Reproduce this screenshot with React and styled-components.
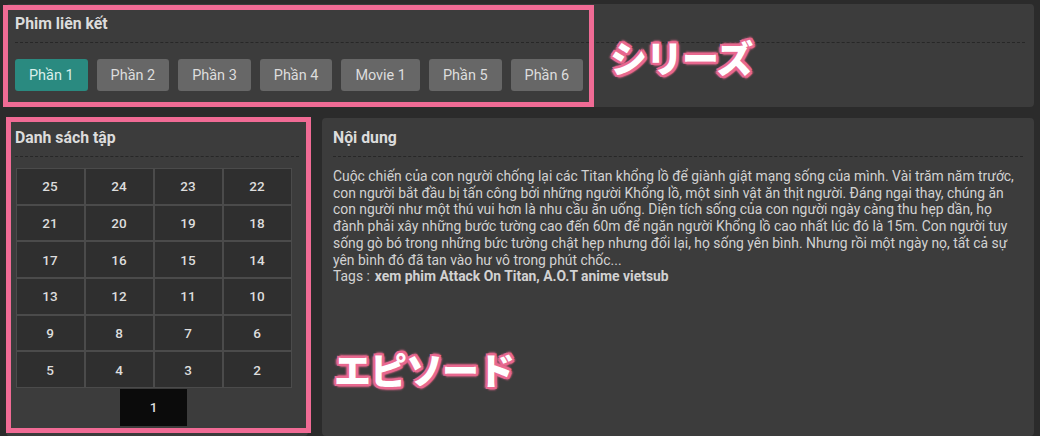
import React from "react";
import styled, { createGlobalStyle } from "styled-components";

const GlobalStyle = createGlobalStyle`
  body {
    margin: 0;
    background: #2b2b2b;
    font-family: Roboto, "Liberation Sans", sans-serif;
  }
`;

const Page = styled.div`
  position: relative;
  width: 1040px;
  height: 436px;
  overflow: hidden;
  box-sizing: border-box;
  padding: 4px 6px 0;
  display: flex;
  flex-direction: column;
  gap: 11px;
`;

const Panel = styled.section`
  background: #3c3c3c;
  border-radius: 4px;
  box-sizing: border-box;
  padding: 10px ${(p) => p.$padX || 9}px 0;
`;

const TopPanel = styled(Panel)`
  height: 103px;
`;

const Heading = styled.h2`
  margin: 0;
  font-size: 15.8px;
  font-weight: 700;
  line-height: 20px;
  color: #dcdcdc;
  padding-bottom: 8px;
  border-bottom: 1px dashed #272727;
`;

const ButtonRow = styled.div`
  margin-top: 16px;
  display: flex;
  gap: 9px;
`;

const PartButton = styled.button`
  height: 32px;
  padding: 0 14px;
  border: none;
  border-radius: 3px;
  background: ${(p) => (p.$active ? "#2a8a80" : "#676767")};
  color: ${(p) => (p.$active ? "#d9efeb" : "#dddddd")};
  font-family: Roboto, "Liberation Sans", sans-serif;
  font-size: 14.45px;
  cursor: pointer;
`;

const BottomRow = styled.div`
  flex: 1;
  display: flex;
  gap: 14px;
  min-height: 0;
`;

const EpisodePanel = styled(Panel)`
  width: 302px;
  flex-shrink: 0;
`;

const ContentPanel = styled(Panel)`
  flex: 1;
`;

const EpisodeGrid = styled.div`
  margin-top: 11px;
  width: 277px;
  display: flex;
  flex-wrap: wrap;
  justify-content: center;
`;

const Episode = styled.a`
  box-sizing: border-box;
  width: ${(p) => (p.$active ? 67 : 69)}px;
  height: 36.7px;
  display: flex;
  align-items: center;
  justify-content: center;
  background: ${(p) => (p.$active ? "#0b0b0b" : "#2f2f2f")};
  border: 1px solid ${(p) => (p.$active ? "#0b0b0b" : "#4b4b4b")};
  margin-top: ${(p) => (p.$active ? 1 : 0)}px;
  color: #dddddd;
  font-size: 13.5px;
  font-weight: 500;
`;

const Summary = styled.p`
  margin: 11px -6px 0 0;
  font-size: 13.9px;
  line-height: 16.7px;
  color: #d2d2d2;
  white-space: nowrap;
`;

const TagList = styled.b`
  font-weight: 700;
  margin-left: 5px;
`;

const Outline = styled.div`
  position: absolute;
  left: ${(p) => p.$left}px;
  top: ${(p) => p.$top}px;
  width: ${(p) => p.$width}px;
  height: ${(p) => p.$height}px;
  box-sizing: border-box;
  border: 5px solid #f06b95;
  pointer-events: none;
`;

const Label = styled.div`
  position: absolute;
  left: ${(p) => p.$left}px;
  top: ${(p) => p.$top}px;
  font-family: "Noto Sans CJK JP", sans-serif;
  font-weight: 900;
  font-size: 37px;
  line-height: 1;
  letter-spacing: -1px;
  color: #ffffff;
  text-shadow:
    2px 0 0 #e8688f, -2px 0 0 #e8688f, 0 2px 0 #e8688f, 0 -2px 0 #e8688f,
    2px 2px 0 #e8688f, -2px -2px 0 #e8688f, 2px -2px 0 #e8688f, -2px 2px 0 #e8688f,
    3px 1px 2px #e8688f, -3px 1px 2px #e8688f, 1px 3px 2px #e8688f, 1px -3px 2px #e8688f;
  pointer-events: none;
`;

const parts = ["Phần 1", "Phần 2", "Phần 3", "Phần 4", "Movie 1", "Phần 5", "Phần 6"];
const episodes = Array.from({ length: 25 }, (_, i) => 25 - i);

const summary = [
  "Cuộc chiến của con người chống lại các Titan khổng lồ để giành giật mạng sống của mình. Vài trăm năm trước,",
  "con người bắt đầu bị tấn công bởi những người Khổng lồ, một sinh vật ăn thịt người. Đáng ngại thay, chúng ăn",
  "con người như một thú vui hơn là nhu cầu ăn uống. Diện tích sống của con người ngày càng thu hẹp dần, họ",
  "đành phải xây những bước tường cao đến 60m để ngăn người Khổng lồ cao nhất lúc đó là 15m. Con người tuy",
  "sống gò bó trong những bức tường chật hẹp nhưng đổi lại, họ sống yên bình. Nhưng rồi một ngày nọ, tất cả sự",
  "yên bình đó đã tan vào hư vô trong phút chốc...",
];

export default function App() {
  return (
    <>
      <GlobalStyle />
      <Page>
        <TopPanel>
          <Heading>Phim liên kết</Heading>
          <ButtonRow>
            {parts.map((p, i) => (
              <PartButton key={p} $active={i === 0}>{p}</PartButton>
            ))}
          </ButtonRow>
        </TopPanel>

        <BottomRow>
          <EpisodePanel>
            <Heading>Danh sách tập</Heading>
            <EpisodeGrid>
              {episodes.map((n) => (
                <Episode key={n} $active={n === 1}>{n}</Episode>
              ))}
            </EpisodeGrid>
          </EpisodePanel>

          <ContentPanel $padX={11}>
            <Heading>Nội dung</Heading>
            <Summary>
              {summary.map((line) => (
                <React.Fragment key={line}>
                  {line}
                  <br />
                </React.Fragment>
              ))}
              Tags :<TagList>xem phim Attack On Titan, A.O.T anime vietsub</TagList>
            </Summary>
          </ContentPanel>
        </BottomRow>

        <Outline $left={3} $top={5} $width={591} $height={102} />
        <Outline $left={6} $top={117} $width={305} $height={316} />
        <Label $left={610} $top={39}>シリーズ</Label>
        <Label $left={334} $top={351}>エピソード</Label>
      </Page>
    </>
  );
}
